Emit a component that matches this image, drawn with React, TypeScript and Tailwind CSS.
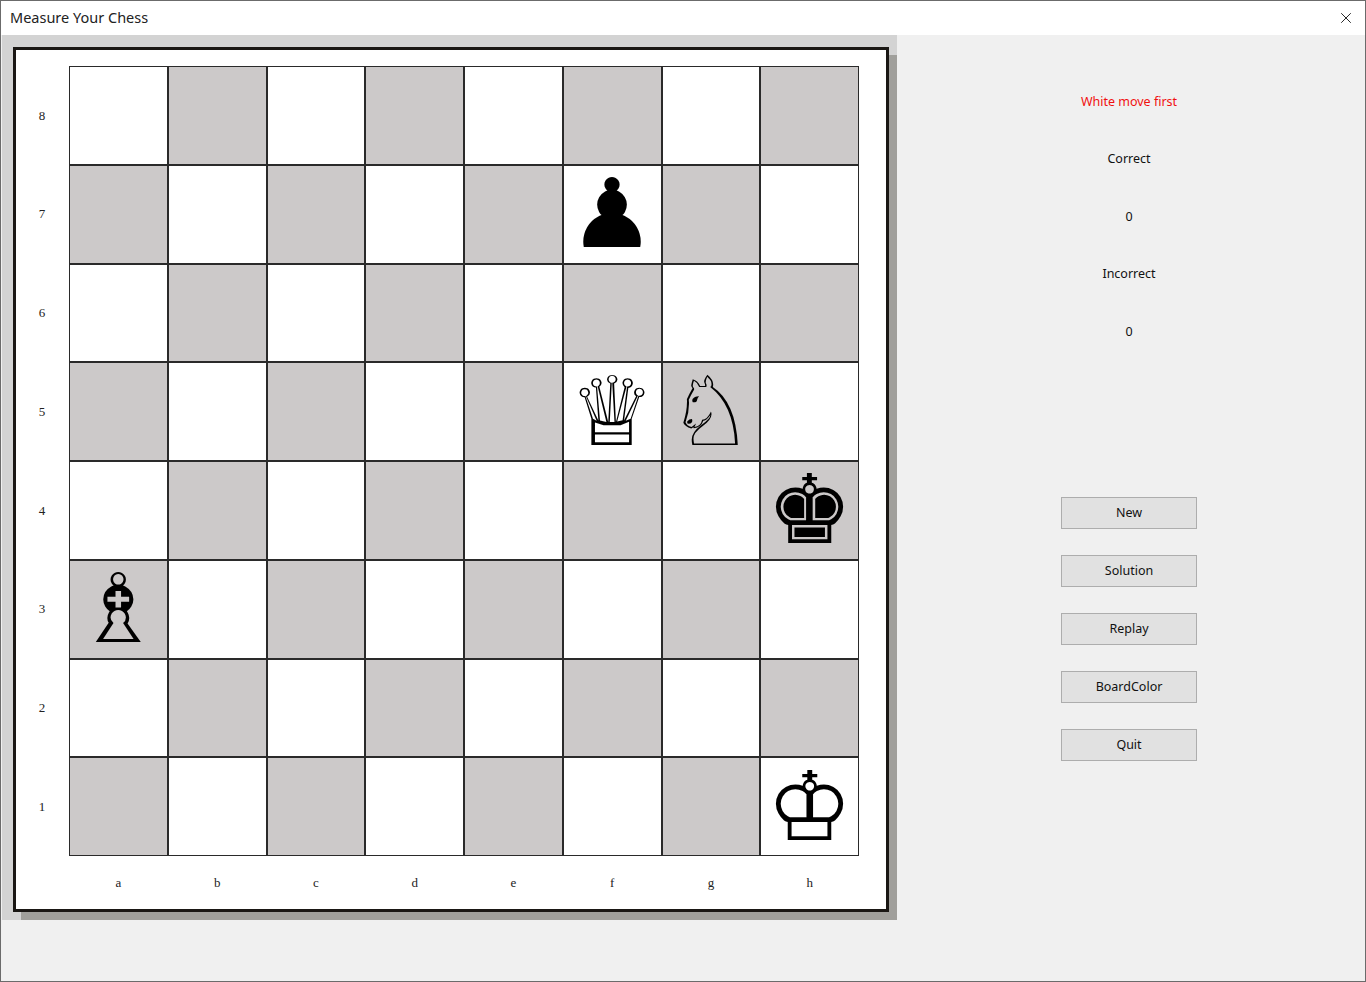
import React from 'react';
import { X } from 'lucide-react';

const pieces: Record<string, string> = {
  f7: '♟',
  f5: '♕',
  g5: '♘',
  h4: '♚',
  a3: '♗',
  h1: '♔',
};

const files = ['a', 'b', 'c', 'd', 'e', 'f', 'g', 'h'];
const ranks = [8, 7, 6, 5, 4, 3, 2, 1];

const buttons = ['New', 'Solution', 'Replay', 'BoardColor', 'Quit'];

const App: React.FC = () => {
  return (
    <div
      className="w-[1366px] h-[982px] flex flex-col bg-[#f0f0f0] border border-[#6b6b6b] overflow-hidden"
      style={{ fontFamily: '"Noto Sans", "Open Sans", sans-serif' }}
    >
      <div className="h-[34px] bg-white flex items-center justify-between pl-[9px] pr-[10px] shrink-0">
        <span className="text-[14.5px] text-[#222]">Measure Your Chess</span>
        <X size={18} strokeWidth={1.3} className="text-[#222]" />
      </div>
      <div className="flex">
        <div className="ml-[1px] w-[895px] h-[885px] bg-[#d3d3d3] pl-[11px] pt-[12px]">
          <div className="w-[876px] h-[865px] bg-white border-[3px] border-[#1a1714] shadow-[8px_8px_0_#a09f9b] pl-[53px] pt-[16px]">
            <div className="relative w-[790px] h-[790px] grid grid-cols-8 grid-rows-8 gap-[2px] p-[1px] bg-[#2a2a2a]">
              {ranks.map((r, ri) =>
                files.map((f, fi) => {
                  const dark = (ri + fi) % 2 === 1;
                  const p = pieces[`${f}${r}`];
                  return (
                    <div
                      key={`${f}${r}`}
                      className={`${dark ? 'bg-[#ccc9c9]' : 'bg-white'} min-h-0 flex items-center justify-center overflow-hidden`}
                    >
                      {p && (
                        <span
                          className="text-[96px] leading-[96px] h-[96px] text-black"
                          style={{ fontFamily: '"DejaVu Sans", sans-serif' }}
                        >
                          {p}
                        </span>
                      )}
                    </div>
                  );
                })
              )}
              <div className="absolute -left-[37px] top-0 h-full w-[20px] flex flex-col">
                {ranks.map((r) => (
                  <div
                    key={r}
                    className="flex-1 flex items-center justify-center text-[13px] text-[#222]"
                    style={{ fontFamily: '"Liberation Serif", serif' }}
                  >
                    {r}
                  </div>
                ))}
              </div>
              <div className="absolute left-0 -bottom-[37px] w-full h-[20px] flex">
                {files.map((f) => (
                  <div
                    key={f}
                    className="flex-1 flex items-center justify-center text-[13px] text-[#222]"
                    style={{ fontFamily: '"Liberation Serif", serif' }}
                  >
                    {f}
                  </div>
                ))}
              </div>
            </div>
          </div>
        </div>
        <div className="w-[464px] flex flex-col items-center pt-[58px] text-[12.5px] text-[#111]">
          <div className="h-[20px] text-[#f01010]">White move first</div>
          <div className="h-[20px] mt-[37px]">Correct</div>
          <div className="h-[20px] mt-[38px]">0</div>
          <div className="h-[20px] mt-[37px]">Incorrect</div>
          <div className="h-[20px] mt-[38px]">0</div>
          <div className="flex flex-col gap-[26px] mt-[154px]">
            {buttons.map((b) => (
              <button
                key={b}
                className="w-[136px] h-[32px] bg-[#e1e1e1] border border-[#adadad] text-[12.5px] text-[#111]"
              >
                {b}
              </button>
            ))}
          </div>
        </div>
      </div>
    </div>
  );
};

export default App;
